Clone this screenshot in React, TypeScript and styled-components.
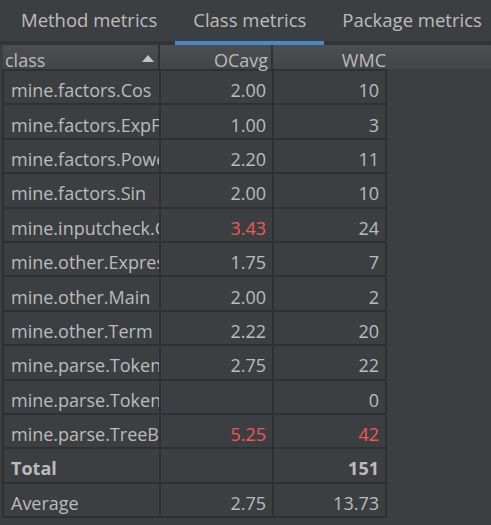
import React from 'react';
import styled, { createGlobalStyle } from 'styled-components';

const GlobalStyle = createGlobalStyle`
  html, body {
    margin: 0;
    padding: 0;
    background: #3c3f41;
  }
  * {
    box-sizing: border-box;
  }
`;

type Row = {
  name: string;
  ocavg: string;
  wmc: string;
  hotAvg?: boolean;
  hotWmc?: boolean;
  bold?: boolean;
};

const rows: Row[] = [
  { name: 'mine.factors.Cos', ocavg: '2.00', wmc: '10' },
  { name: 'mine.factors.ExpFactor', ocavg: '1.00', wmc: '3' },
  { name: 'mine.factors.Power', ocavg: '2.20', wmc: '11' },
  { name: 'mine.factors.Sin', ocavg: '2.00', wmc: '10' },
  { name: 'mine.inputcheck.Checker', ocavg: '3.43', wmc: '24', hotAvg: true },
  { name: 'mine.other.Expression', ocavg: '1.75', wmc: '7' },
  { name: 'mine.other.Main', ocavg: '2.00', wmc: '2' },
  { name: 'mine.other.Term', ocavg: '2.22', wmc: '20' },
  { name: 'mine.parse.Tokenizer', ocavg: '2.75', wmc: '22' },
  { name: 'mine.parse.TokenType', ocavg: '', wmc: '0' },
  { name: 'mine.parse.TreeBuilder', ocavg: '5.25', wmc: '42', hotAvg: true, hotWmc: true },
  { name: 'Total', ocavg: '', wmc: '151', bold: true },
  { name: 'Average', ocavg: '2.75', wmc: '13.73' },
];

const tabs = ['Method metrics', 'Class metrics', 'Package metrics'];

function App() {
  return (
    <Panel>
      <GlobalStyle />
      <TabBar>
        {tabs.map((t) => (
          <Tab key={t} active={t === 'Class metrics'}>
            {t}
          </Tab>
        ))}
      </TabBar>

      <TableBox>
        <HeaderRow>
          <HeaderCell width={157} align="left">
            class
            <SortArrow />
          </HeaderCell>
          <HeaderCell width={113} align="right">
            OCavg
          </HeaderCell>
          <HeaderCell width={116} align="right" last>
            WMC
          </HeaderCell>
        </HeaderRow>

        <Body>
          {rows.map((r) => (
            <React.Fragment key={r.name}>
              <NameCell bold={r.bold}>{r.name}</NameCell>
              <NumCell hot={r.hotAvg} bold={r.bold}>
                {r.ocavg}
              </NumCell>
              <NumCell hot={r.hotWmc} bold={r.bold}>
                {r.wmc}
              </NumCell>
            </React.Fragment>
          ))}
        </Body>
      </TableBox>
    </Panel>
  );
}

const Panel = styled.div`
  width: 491px;
  height: 525px;
  overflow: hidden;
  background: #3c3f41;
  font-family: 'Open Sans', 'Noto Sans', sans-serif;
  color: #bbbbbb;
`;

const TabBar = styled.div`
  display: flex;
  height: 45px;
  padding-left: 3px;
  border-bottom: 4px solid #323436;
  white-space: nowrap;
`;

const Tab = styled.div<{ active?: boolean }>`
  display: flex;
  align-items: center;
  height: 45px;
  margin-bottom: -4px;
  padding: 2px 18px 4px;
  font-size: 18.5px;
  color: #bdbdbd;
  border-bottom: 4px solid ${(p) => (p.active ? '#4a88c7' : 'transparent')};
  flex-shrink: 0;
`;

const TableBox = styled.div`
  padding-left: 2px;
`;

const HeaderRow = styled.div`
  display: flex;
  height: 24px;
  margin-left: 1px;
  background: linear-gradient(#4b4e50, #434547);
`;

const HeaderCell = styled.div<{ width: number; align: 'left' | 'right'; last?: boolean }>`
  position: relative;
  display: flex;
  align-items: center;
  justify-content: ${(p) => (p.align === 'left' ? 'flex-start' : 'flex-end')};
  width: ${(p) => p.width}px;
  padding: 6px ${(p) => (p.align === 'left' ? '20px' : '3px')} 0 2px;
  font-size: 18px;
  line-height: 1;
  color: #bbbbbb;
  border-right: ${(p) => (p.last ? 'none' : '2px solid #2f3133')};
`;

const SortArrow = styled.span`
  position: absolute;
  right: 4px;
  top: 10px;
  width: 0;
  height: 0;
  border-left: 6px solid transparent;
  border-right: 6px solid transparent;
  border-bottom: 7px solid #c4c4c4;
`;

const Body = styled.div`
  display: grid;
  grid-template-columns: 155px 111px 111px;
  grid-auto-rows: 32.4px;
  gap: 2px;
  width: 385px;
  padding: 2px;
  background: #2e3032;
`;

const Cell = styled.div<{ bold?: boolean }>`
  display: flex;
  align-items: center;
  padding-top: 6px;
  overflow: hidden;
  white-space: nowrap;
  background: #3c3f41;
  font-size: 18px;
  font-weight: ${(p) => (p.bold ? 700 : 400)};
`;

const NameCell = styled(Cell)`
  padding-left: 7px;
`;

const NumCell = styled(Cell)<{ hot?: boolean }>`
  justify-content: flex-end;
  padding-right: 6px;
  color: ${(p) => (p.hot ? '#f25757' : '#bbbbbb')};
`;

export default App;
